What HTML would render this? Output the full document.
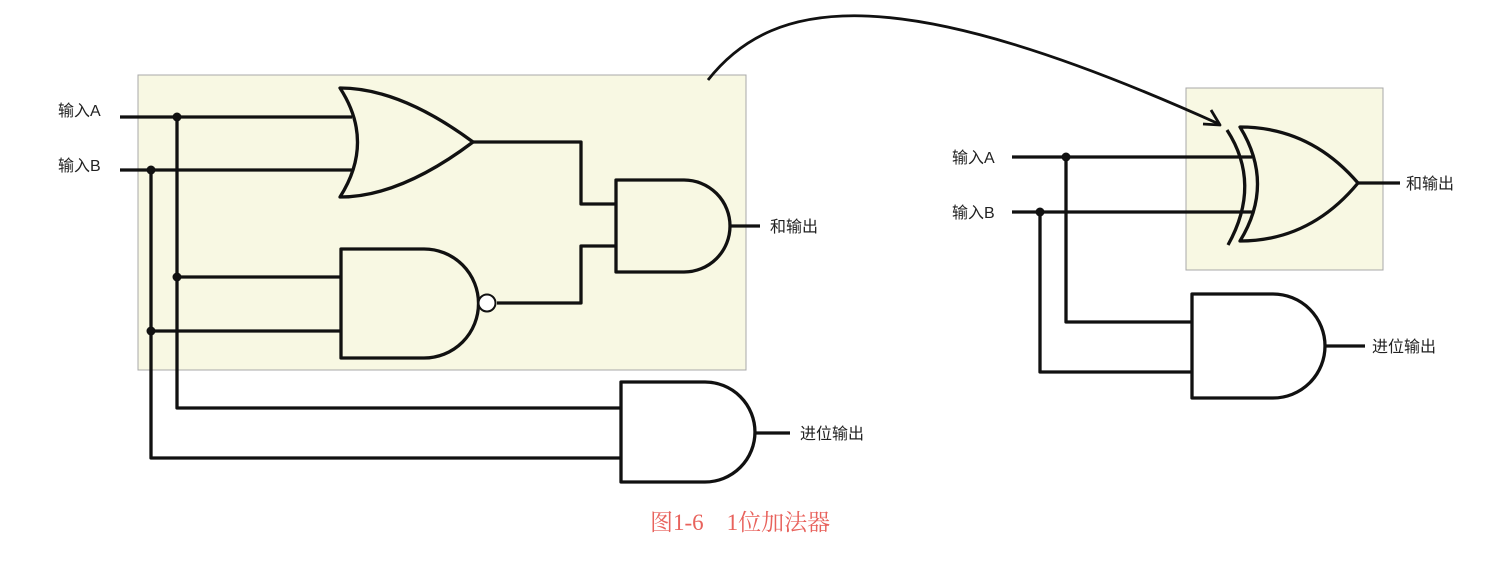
<!DOCTYPE html>
<html><head><meta charset="utf-8"><style>
html,body{margin:0;padding:0;background:#fff;}
svg{display:block}
text{font-family:"Liberation Sans","Noto Sans CJK SC",sans-serif;font-size:16px;fill:#222}
</style></head><body>
<svg width="1487" height="576" viewBox="0 0 1487 576" xmlns="http://www.w3.org/2000/svg">
<rect x="138" y="75" width="608" height="295" fill="#f8f8e3" stroke="#a8a8a8" stroke-width="1"/>
<rect x="1186" y="88" width="197" height="182" fill="#f8f8e3" stroke="#a8a8a8" stroke-width="1"/>
<g fill="none" stroke="#111" stroke-width="3.3" stroke-linejoin="round">
<path d="M120 117H352M120 170H352M177 117V408H622M151 170V458H622"/>
<path d="M177 277H342M151 331H342"/>
<path d="M473 142H581V204H616M497 303H581V246H616M730 226H760M755 433H790"/>
<path d="M340 88 Q400 88 473 142 Q400 197 340 197 Q375 142 340 88Z" fill="#f8f8e3"/>
<path d="M616 180H684A46 46 0 0 1 684 272H616Z" fill="#f8f8e3"/>
<path d="M341 249H424A54.5 54.5 0 0 1 424 358H341Z" fill="#f8f8e3"/>
<circle cx="487" cy="303" r="8.5" fill="#fff" stroke-width="2"/>
<path d="M621 382H705A50 50 0 0 1 705 482H621Z" fill="#fff"/>
<path d="M1012 157H1252M1012 212H1252M1066 157V322H1192M1040 212V372H1192M1358 183H1400M1325 346H1365"/>
<path d="M1240 127 Q1310 127 1358 183 Q1310 241 1240 241 Q1275 184 1240 127Z" fill="#f8f8e3"/>
<path d="M1227 130 Q1262 184 1228 245"/>
<path d="M1192 294H1273A52 52 0 0 1 1273 398H1192Z" fill="#fff"/>
<path d="M708 80 C775 -5 900 -20 1219 124" stroke-width="2.8"/>
<path d="M1203 124 L1220 125 L1211 110" stroke-width="2.8"/>
</g>
<g fill="#111">
<circle cx="177" cy="117" r="4.5"/><circle cx="151" cy="170" r="4.5"/>
<circle cx="177" cy="277" r="4.5"/><circle cx="151" cy="331" r="4.5"/>
<circle cx="1066" cy="157" r="4.5"/><circle cx="1040" cy="212" r="4.5"/>
</g>
<text x="58" y="116">输入A</text>
<text x="58" y="171">输入B</text>
<text x="770" y="232">和输出</text>
<text x="800" y="439">进位输出</text>
<text x="952" y="163">输入A</text>
<text x="952" y="218">输入B</text>
<text x="1406" y="189">和输出</text>
<text x="1372" y="352">进位输出</text>
<text x="650" y="530" style="font-family:'Liberation Serif','Noto Serif CJK SC',serif;font-size:23px;fill:#e8625c">图1-6　1位加法器</text>
</svg>
</body></html>
